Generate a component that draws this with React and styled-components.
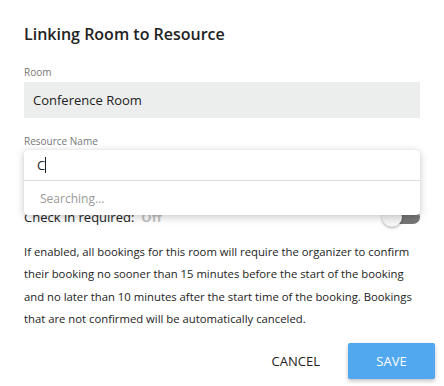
import React from "react";
import styled, { createGlobalStyle } from "styled-components";

const Global = createGlobalStyle`
  html, body { margin: 0; padding: 0; background: #fff; }
  body { font-family: "Open Sans", "Noto Sans", sans-serif; color: #333; }
  * { box-sizing: border-box; }
`;

const Dialog = styled.div`
  width: 444px;
  height: 386px;
  background: #fff;
  padding: 23px 24px 0 24px;
  display: flex;
  flex-direction: column;
`;

const Title = styled.h2`
  margin: 0;
  font-size: 16px;
  font-weight: 600;
  color: #222;
  line-height: 22px;
`;

const Field = styled.div`
  display: flex;
  flex-direction: column;
  margin-top: ${(p) => p.$top}px;
  position: relative;
`;

const Label = styled.label`
  font-size: 10px;
  color: #777;
  line-height: 14px;
  margin-bottom: 3px;
`;

const ReadInput = styled.div`
  height: 36px;
  background: #eceeed;
  padding: 0 9px;
  display: flex;
  align-items: center;
  font-size: 13px;
  color: #222;
`;

const Dropdown = styled.div`
  position: absolute;
  top: 16px;
  left: 0;
  right: 0;
  background: #fff;
  border-radius: 4px;
  box-shadow: 0 2px 8px rgba(0, 0, 0, 0.22), 0 0 1px rgba(0, 0, 0, 0.15);
  z-index: 2;
`;

const SearchRow = styled.div`
  height: 31px;
  padding: 0 13px;
  display: flex;
  align-items: center;
  font-size: 13px;
  color: #222;
  border-bottom: 1px solid #dcdcdc;
`;

const Caret = styled.span`
  display: inline-block;
  width: 1px;
  height: 16px;
  background: #222;
`;

const Status = styled.div`
  height: 34px;
  padding: 0 16px;
  display: flex;
  align-items: center;
  font-size: 12px;
  color: #999;
`;

const Spacer = styled.div`
  height: 34px;
`;

const ToggleRow = styled.div`
  display: flex;
  align-items: center;
  justify-content: space-between;
  height: 22px;
  margin-top: 21px;
`;

const ToggleLabel = styled.div`
  font-size: 13px;
  color: #222;
  display: flex;
  gap: 7px;
`;

const Off = styled.span`
  color: #c4c4c4;
  font-weight: 700;
`;

const Track = styled.div`
  width: 36px;
  height: 14px;
  border-radius: 7px;
  background: #777;
  position: relative;
`;

const Thumb = styled.div`
  position: absolute;
  left: -2px;
  top: -3px;
  width: 20px;
  height: 20px;
  border-radius: 50%;
  background: #f5f5f5;
  box-shadow: 0 1px 3px rgba(0, 0, 0, 0.35);
`;

const Help = styled.p`
  margin: 13px 8px 0 0;
  font-size: 11.3px;
  line-height: 22.4px;
  color: #222;
`;

const Actions = styled.div`
  display: flex;
  justify-content: flex-end;
  align-items: center;
  gap: 28px;
  margin-top: 12px;
  margin-right: -15px;
`;

const Button = styled.button`
  font-family: inherit;
  font-size: 13px;
  border: none;
  cursor: pointer;
  height: 36px;
  border-radius: 2px;
  padding: 0 ${(p) => (p.$primary ? 28 : 0)}px;
  min-width: ${(p) => (p.$primary ? 87 : 0)}px;
  background: ${(p) => (p.$primary ? "#52a8ee" : "transparent")};
  color: ${(p) => (p.$primary ? "#fff" : "#222")};
  box-shadow: ${(p) => (p.$primary ? "0 2px 4px rgba(0,0,0,0.25)" : "none")};
`;

export default function App() {
  return (
    <>
      <Global />
      <Dialog>
        <Title>Linking Room to Resource</Title>
        <Field $top={20}>
          <Label>Room</Label>
          <ReadInput>Conference Room</ReadInput>
        </Field>
        <Field $top={16}>
          <Label>Resource Name</Label>
          <Spacer />
          <Dropdown>
            <SearchRow>
              C<Caret />
            </SearchRow>
            <Status>Searching...</Status>
          </Dropdown>
        </Field>
        <ToggleRow>
          <ToggleLabel>
            Check in required: <Off>Off</Off>
          </ToggleLabel>
          <Track>
            <Thumb />
          </Track>
        </ToggleRow>
        <Help>
          If enabled, all bookings for this room will require the organizer to
          confirm their booking no sooner than 15 minutes before the start of
          the booking and no later than 10 minutes after the start time of the
          booking. Bookings that are not confirmed will be automatically
          canceled.
        </Help>
        <Actions>
          <Button>CANCEL</Button>
          <Button $primary>SAVE</Button>
        </Actions>
      </Dialog>
    </>
  );
}
